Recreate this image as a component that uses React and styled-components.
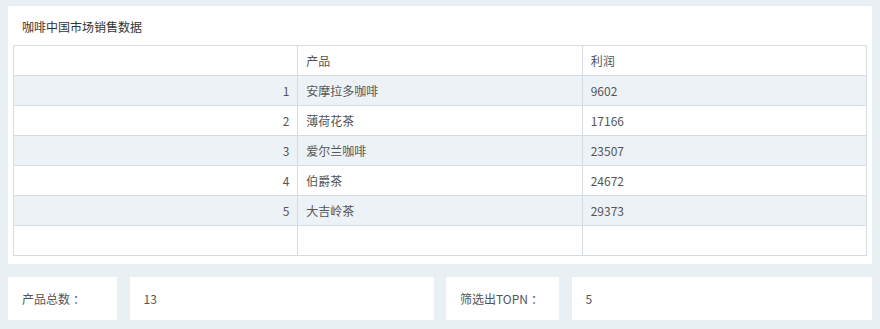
import React from 'react';
import styled, { createGlobalStyle } from 'styled-components';

const GlobalStyle = createGlobalStyle`
  body {
    margin: 0;
    background: #e9f0f4;
    font-family: "Noto Sans CJK SC", "Liberation Sans", sans-serif;
  }
`;

const Page = styled.div`
  padding: 6px 8px 10px;
  display: flex;
  flex-direction: column;
  gap: 13px;
`;

const Panel = styled.div`
  background: #fff;
  padding: 0 5px 8px;
`;

const Title = styled.div`
  height: 39px;
  line-height: 41px;
  padding-left: 9px;
  font-size: 12px;
  color: #333;
`;

const Table = styled.table`
  width: 100%;
  border-collapse: collapse;
  table-layout: fixed;
  font-size: 12px;
  color: #555;
`;

const Row = styled.tr`
  height: 30px;
  background: ${p => (p.$striped ? '#edf2f6' : '#fff')};
`;

const Cell = styled.td`
  border: 1px solid #d5dde3;
  padding: 0 8px;
  text-align: ${p => (p.$right ? 'right' : 'left')};
  white-space: nowrap;
  line-height: 28px;
`;

const Cards = styled.div`
  display: grid;
  grid-template-columns: 109px 304px 113px 1fr;
  column-gap: 12.5px;
`;

const Card = styled.div`
  background: #fff;
  height: 43px;
  display: flex;
  align-items: center;
  padding-left: 14px;
  font-size: 12px;
  color: #555;
`;

// full-width colon sits apart from the label
const Colon = styled.span`
  margin-left: 3px;
`;

const rows = [
  { name: '安摩拉多咖啡', profit: 9602 },
  { name: '薄荷花茶', profit: 17166 },
  { name: '爱尔兰咖啡', profit: 23507 },
  { name: '伯爵茶', profit: 24672 },
  { name: '大吉岭茶', profit: 29373 },
];

export default function App() {
  return (
    <>
      <GlobalStyle />
      <Page>
        <Panel>
          <Title>咖啡中国市场销售数据</Title>
          <Table>
            <tbody>
              <Row>
                <Cell />
                <Cell>产品</Cell>
                <Cell>利润</Cell>
              </Row>
              {rows.map((r, i) => (
                <Row key={r.name} $striped={i % 2 === 0}>
                  <Cell $right>{i + 1}</Cell>
                  <Cell>{r.name}</Cell>
                  <Cell>{r.profit}</Cell>
                </Row>
              ))}
              <Row>
                <Cell />
                <Cell />
                <Cell />
              </Row>
            </tbody>
          </Table>
        </Panel>
        <Cards>
          <Card>产品总数<Colon>：</Colon></Card>
          <Card>13</Card>
          <Card>筛选出TOPN<Colon>：</Colon></Card>
          <Card>5</Card>
        </Cards>
      </Page>
    </>
  );
}
